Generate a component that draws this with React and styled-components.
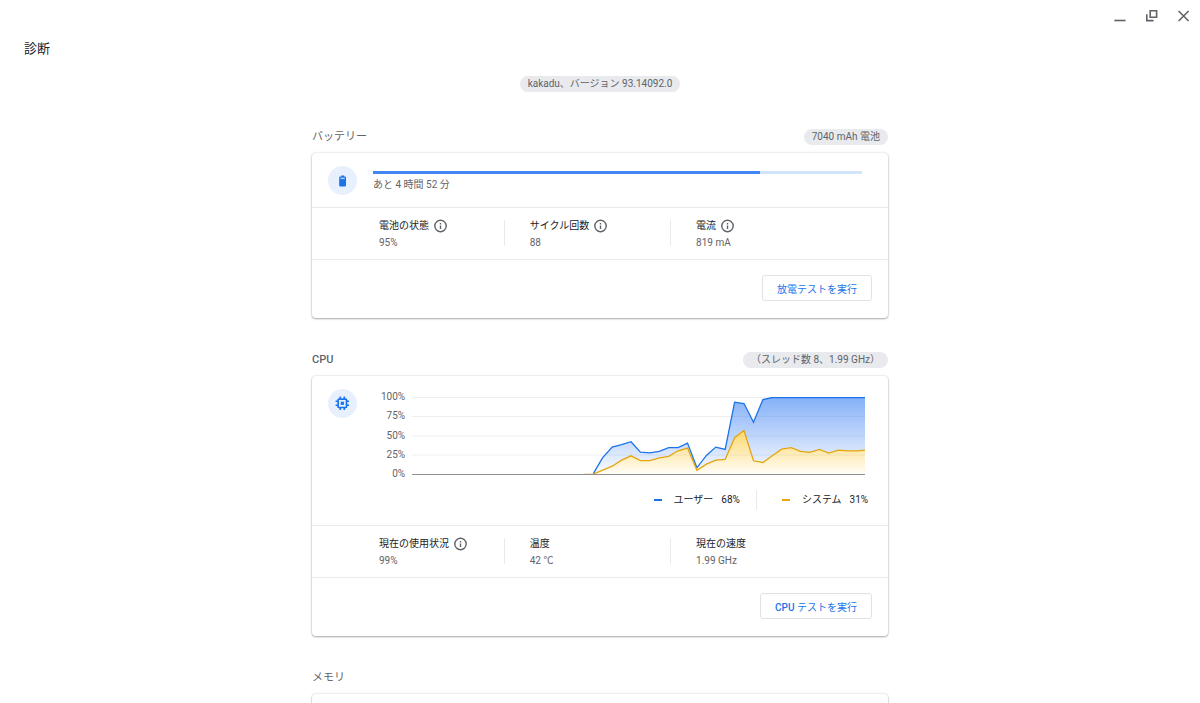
import React from "react";
import styled, { createGlobalStyle } from "styled-components";

const userPoints = [
  0, 1, 22, 35.6, 38.7, 42.6, 29, 28, 30, 34.8, 34.8, 40.8, 8.7, 24.8, 35.6,
  32.6, 93.9, 92.2, 67.8, 97.4, 100, 100, 100, 100, 100, 100, 100, 100, 100,
  100, 100,
];
const systemPoints = [
  0, 0.4, 5.6, 10.8, 18.7, 24.3, 18, 18, 21.7, 23.5, 30.8, 34.3, 5.6, 13.5,
  18.7, 19.7, 47.8, 57, 17.8, 15.6, 24.3, 33, 34.8, 30, 28.7, 32.6, 27.8, 31.7,
  30.8, 30.8, 31.7,
];

const chartWidth = 453;
const toPoints = (values) =>
  values.map((value, i) => [
    (171.9 + i * 9.42).toFixed(1),
    (77.5 - value * 0.77).toFixed(1),
  ]);
const toLine = (points) => points.map((p) => p.join(",")).join(" ");

const UsageChart = () => {
  const user = toPoints(userPoints);
  const system = toPoints(systemPoints);
  const last = system[system.length - 1][0];
  return (
    <Chart>
      <ChartLabels>
        <span>100%</span>
        <span>75%</span>
        <span>50%</span>
        <span>25%</span>
        <span>0%</span>
      </ChartLabels>
      <ChartSvg viewBox={`0 0 ${chartWidth} 78`} preserveAspectRatio="none">
        <defs>
          <linearGradient id="user" gradientUnits="userSpaceOnUse" x1="0" y1="0" x2="0" y2="78">
            <stop offset="0" stopColor="#4285f4" stopOpacity="0.65" />
            <stop offset="1" stopColor="#4285f4" stopOpacity="0.02" />
          </linearGradient>
          <linearGradient id="system" gradientUnits="userSpaceOnUse" x1="0" y1="30" x2="0" y2="78">
            <stop offset="0" stopColor="#fbbc04" stopOpacity="0.62" />
            <stop offset="1" stopColor="#fbbc04" stopOpacity="0.02" />
          </linearGradient>
        </defs>
        {[0.5, 19.5, 39, 58].map((y) => (
          <line key={y} x1="0" x2={chartWidth} y1={y} y2={y} stroke="#eeeff0" />
        ))}
        <polygon points={toLine([...user, ...[...system].reverse()])} fill="url(#user)" />
        <polygon points={`${toLine(system)} ${last},77.5 171.9,77.5`} fill="url(#system)" />
        <polyline points={toLine(user.slice(1))} fill="none" stroke="#1a73e8" strokeWidth="1.3" />
        <polyline points={toLine(system)} fill="none" stroke="#e5a50f" strokeWidth="1.3" />
        <line x1="0" x2={chartWidth} y1="77.5" y2="77.5" stroke="#8d9094" />
      </ChartSvg>
    </Chart>
  );
};

const Stat = ({ label, value, info }) => (
  <StatItem>
    <StatLabel>
      {label}
      {info && (
        <InfoButton aria-label={label}>
          <svg width="15" height="15" viewBox="0 0 15 15" fill="none" stroke="currentColor">
            <circle cx="7.5" cy="7" r="5.7" strokeWidth="1.4" />
            <path d="M7.5 6.4v3.5M7.5 4v1.4" strokeWidth="1.4" />
          </svg>
        </InfoButton>
      )}
    </StatLabel>
    <StatValue>{value}</StatValue>
  </StatItem>
);

const App = () => {
  return (
    <>
      <GlobalStyle />
      <Page>
        <WindowBar>
          <WindowButton aria-label="最小化">
            <svg width="16" height="16" viewBox="0 0 16 16">
              <path d="M2.3 12.5h11.2" />
            </svg>
          </WindowButton>
          <WindowButton aria-label="元に戻す">
            <svg width="16" height="16" viewBox="0 0 16 16">
              <path d="M6.2 2.8h6.4v6.4H6.2zM2.8 6.2v6.4h6.8" />
            </svg>
          </WindowButton>
          <WindowButton aria-label="閉じる">
            <svg width="16" height="16" viewBox="0 0 16 16">
              <path d="M2.6 3l10 10M12.6 3l-10 10" />
            </svg>
          </WindowButton>
        </WindowBar>
        <Title>診断</Title>

        <Main>
          <Center>
            <Chip>kakadu、バージョン 93.14092.0</Chip>
          </Center>

          <Section>
            <SectionHeader>
              <Heading>バッテリー</Heading>
              <Chip>7040 mAh 電池</Chip>
            </SectionHeader>
            <Card>
              <Top>
                <IconCircle>
                  <svg width="8" height="12" viewBox="0 0 8 12">
                    <path
                      d="M2.2.4h3v1.2h1c.5 0 .8.3.8.8v8.2c0 .5-.3.8-.8.8H1c-.5 0-.8-.3-.8-.8V2.4c0-.5.3-.8.8-.8h1.2z"
                      fill="#1a73e8"
                    />
                    <path d="M1.5 2.6h4.2v1.5H1.5z" fill="#a9c9fa" />
                  </svg>
                </IconCircle>
                <Battery>
                  <Progress>
                    <Fill style={{ width: "79.2%" }} />
                  </Progress>
                  <Remaining>あと 4 時間 52 分</Remaining>
                </Battery>
              </Top>
              <Stats>
                <Stat label="電池の状態" value="95%" info />
                <Stat label="サイクル回数" value="88" info />
                <Stat label="電流" value="819 mA" info />
              </Stats>
              <Footer>
                <TestButton>放電テストを実行</TestButton>
              </Footer>
            </Card>
          </Section>

          <Section>
            <SectionHeader>
              <Heading $medium>CPU</Heading>
              <Chip>（スレッド数 8、1.99 GHz）</Chip>
            </SectionHeader>
            <Card>
              <Top>
                <IconCircle>
                  <svg width="15" height="15" viewBox="0 0 15 15" fill="none" stroke="#1a73e8">
                    <rect x="3.1" y="3.1" width="8.4" height="8.4" rx="0.8" strokeWidth="1.7" />
                    <path
                      d="M5.3.6v2M9.3.6v2M5.3 12v2M9.3 12v2M.6 5.3h2M.6 9.3h2M12 5.3h2M12 9.3h2"
                      strokeWidth="1.6"
                    />
                    <rect x="5.7" y="5.7" width="3.2" height="3.2" fill="#1a73e8" stroke="none" />
                  </svg>
                </IconCircle>
                <Usage>
                  <UsageChart />
                  <Legend>
                    <LegendItem color="#1a73e8">
                      <span>ユーザー</span>
                      <span>68%</span>
                    </LegendItem>
                    <LegendItem color="#f2a60c">
                      <span>システム</span>
                      <span>31%</span>
                    </LegendItem>
                  </Legend>
                </Usage>
              </Top>
              <Stats>
                <Stat label="現在の使用状況" value="99%" info />
                <Stat label="温度" value="42 ℃" />
                <Stat label="現在の速度" value="1.99 GHz" />
              </Stats>
              <Footer>
                <TestButton>
                  <strong>CPU</strong> テストを実行
                </TestButton>
              </Footer>
            </Card>
          </Section>

          <Section>
            <SectionHeader>
              <Heading>メモリ</Heading>
            </SectionHeader>
            <Card>
              <Footer />
            </Card>
          </Section>
        </Main>
      </Page>
    </>
  );
};

const GlobalStyle = createGlobalStyle`
  * {
    box-sizing: border-box;
  }

  body {
    margin: 0;
    background: #fff;
    color: #202124;
    font-family: Roboto, "Noto Sans CJK JP", sans-serif;
    font-size: 10px;
    line-height: 16px;
  }

  button {
    font-family: inherit;
    cursor: pointer;
  }
`;

const Page = styled.div`
  height: 100vh;
  overflow: hidden;
`;

const WindowBar = styled.div`
  display: flex;
  justify-content: flex-end;
  gap: 16px;
  height: 32px;
  padding: 8px;
`;

const WindowButton = styled.button`
  width: 16px;
  height: 16px;
  padding: 0;
  border: 0;
  background: none;

  svg {
    display: block;
    fill: none;
    stroke: #5f6368;
    stroke-width: 1.6;
  }
`;

const Title = styled.h1`
  margin: 0;
  padding: 9px 24px 7px;
  font-size: 13px;
  font-weight: 400;
  line-height: 16px;
`;

const Main = styled.main`
  max-width: 592px;
  margin: 0 auto;
  padding: 12px 8px;
`;

const Center = styled.div`
  display: flex;
  justify-content: center;
  margin-bottom: 37px;
`;

const Chip = styled.span`
  height: 16px;
  padding: 0 8px;
  border-radius: 8px;
  background: #e8eaed;
  color: #5f6368;
  line-height: 16px;
`;

const Section = styled.section`
  margin-bottom: 34px;
`;

const SectionHeader = styled.div`
  display: flex;
  align-items: center;
  justify-content: space-between;
  height: 16px;
  margin-bottom: 8px;
`;

const Heading = styled.h2`
  margin: 0;
  color: #5f6368;
  font-size: 11px;
  font-weight: ${({ $medium }) => ($medium ? 500 : 400)};
`;

const Card = styled.div`
  border-radius: 4px;
  background: #fff;
  box-shadow: 0 1px 2px rgba(60, 64, 67, 0.4), 0 0 2px rgba(60, 64, 67, 0.25);
`;

const Top = styled.div`
  display: flex;
  gap: 16px;
  padding: 13px 16px 12px;
`;

const IconCircle = styled.div`
  display: flex;
  flex: none;
  align-items: center;
  justify-content: center;
  width: 29px;
  height: 29px;
  border-radius: 50%;
  background: #e8f0fe;
`;

const Battery = styled.div`
  flex: 1;
  padding: 5px 10px 0 0;
`;

const Progress = styled.div`
  height: 3px;
  background: #d2e3fc;
`;

const Fill = styled.div`
  height: 100%;
  background: #4285f4;
`;

const Remaining = styled.div`
  margin-top: 3px;
  color: #5f6368;
`;

const Usage = styled.div`
  flex: 1;
`;

const Chart = styled.div`
  display: flex;
  gap: 7px;
  padding: 0 7px 0 8px;
`;

const ChartLabels = styled.div`
  display: flex;
  flex-direction: column;
  justify-content: space-between;
  height: 93px;
  color: #5f6368;
  text-align: right;
`;

const ChartSvg = styled.svg`
  flex: 1;
  min-width: 0;
  height: 78px;
  margin-top: 8px;
`;

const Legend = styled.div`
  display: flex;
  justify-content: flex-end;
  padding: 8px 4px 3px 0;
`;

const LegendItem = styled.div`
  display: flex;
  align-items: center;
  gap: 8px;
  height: 20px;

  & + & {
    margin-left: 16px;
    padding-left: 25px;
    border-left: 1px solid #e8eaed;
  }

  &::before {
    content: "";
    width: 8px;
    height: 2px;
    margin-right: 4px;
    background: ${({ color }) => color};
  }
`;

const Stats = styled.div`
  display: grid;
  grid-template-columns: 3fr 4fr 5fr;
  padding: 12px 10px 13px 67px;
  border-top: 1px solid #e8eaed;
  border-bottom: 1px solid #e8eaed;
`;

const StatItem = styled.div`
  height: 26px;

  & + & {
    padding-left: 25px;
    border-left: 1px solid #e8eaed;
  }
`;

const StatLabel = styled.div`
  display: flex;
  align-items: center;
  gap: 4px;
  height: 12px;
`;

const InfoButton = styled.button`
  display: flex;
  padding: 0;
  border: 0;
  background: none;
  color: #5f6368;
`;

const StatValue = styled.div`
  height: 16px;
  margin-top: 3px;
  color: #5f6368;
`;

const Footer = styled.div`
  display: flex;
  justify-content: flex-end;
  min-height: 58px;
  padding: 15px 16px;
`;

const TestButton = styled.button`
  height: 26px;
  padding: 0 14px;
  border: 1px solid #e0e2e6;
  border-radius: 3px;
  background: #fff;
  color: #1a73e8;
  font-size: 10px;

  strong {
    font-weight: 500;
  }
`;

export default App;
